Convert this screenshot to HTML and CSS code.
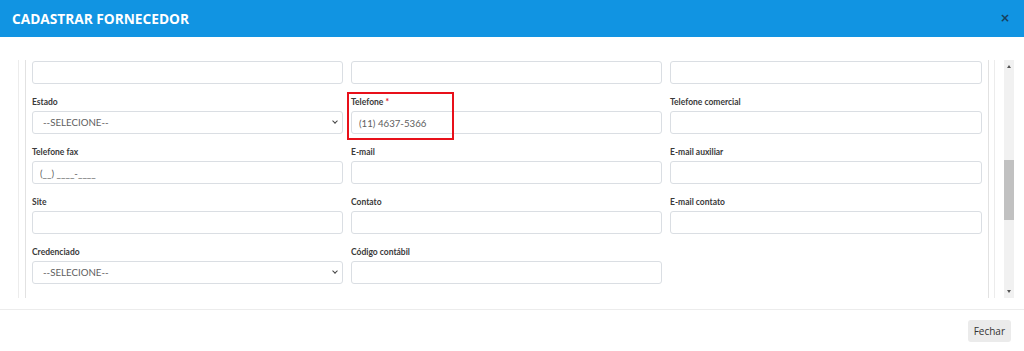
FILE: index.html
```html
<!DOCTYPE html>
<html lang="pt-BR">
<head>
    <meta charset="UTF-8">
    <meta name="viewport" content="width=device-width, initial-scale=1.0">
    <title>Cadastrar Fornecedor</title>
    <link rel="stylesheet" href="styles.css">
</head>
<body>

<div class="modal">
    <!-- Header -->
    <div class="modal-header">
        <h2>CADASTRAR FORNECEDOR</h2>
        <span class="close">&times;</span>
    </div>

    <!-- Body -->
    <div class="modal-body">
        <div class="scroll-wrap">
            <div class="scroll-view">
                <div class="panel-outer">
                    <div class="panel">
                        <div class="form-grid">
                            <div class="field"><input type="text"></div>
                            <div class="field"><input type="text"></div>
                            <div class="field"><input type="text"></div>

                            <div class="field">
                                <label>Estado</label>
                                <div class="select">--SELECIONE--</div>
                            </div>
                            <div class="field highlight">
                                <label>Telefone <span class="req">*</span></label>
                                <input type="text" value="(11) 4637-5366">
                                <div class="mark"></div>
                            </div>
                            <div class="field">
                                <label>Telefone comercial</label>
                                <input type="text">
                            </div>

                            <div class="field">
                                <label>Telefone fax</label>
                                <input type="text" value="(__) ____-____">
                            </div>
                            <div class="field">
                                <label>E-mail</label>
                                <input type="text">
                            </div>
                            <div class="field">
                                <label>E-mail auxiliar</label>
                                <input type="text">
                            </div>

                            <div class="field">
                                <label>Site</label>
                                <input type="text">
                            </div>
                            <div class="field">
                                <label>Contato</label>
                                <input type="text">
                            </div>
                            <div class="field">
                                <label>E-mail contato</label>
                                <input type="text">
                            </div>

                            <div class="field">
                                <label>Credenciado</label>
                                <div class="select">--SELECIONE--</div>
                            </div>
                            <div class="field">
                                <label>Código contábil</label>
                                <input type="text">
                            </div>
                        </div>
                    </div>
                </div>
            </div>
            <div class="scrollbar">
                <span class="arrow up"></span>
                <div class="track"><div class="thumb"></div></div>
                <span class="arrow down"></span>
            </div>
        </div>
    </div>

    <!-- Footer -->
    <div class="modal-footer">
        <button>Fechar</button>
    </div>
</div>

</body>
</html>
```

FILE: styles.css
```css
body {
    margin: 0;
    font-family: Lato, "Open Sans", Arial, sans-serif;
    background-color: #fff;
    color: #333;
}

.modal {
    height: 351px;
    display: flex;
    flex-direction: column;
}

.modal-header {
    height: 37px;
    background-color: #1194e2;
    display: flex;
    align-items: center;
    justify-content: space-between;
    padding: 0 12px;
    box-sizing: border-box;
}

.modal-header h2 {
    margin: 0;
    color: #fff;
    font-family: "Open Sans", Arial, sans-serif;
    font-size: 13.7px;
    font-weight: 700;
}

.modal-header .close {
    color: #173f5c;
    font-family: "DejaVu Sans", sans-serif;
    font-size: 12px;
    font-weight: 700;
    line-height: 1;
    margin-top: -2px;
    margin-right: 2px;
}

.modal-body {
    padding-top: 23px;
    height: 261px;
    box-sizing: border-box;
}

.scroll-wrap {
    display: flex;
    margin-left: 18px;
    width: 996px;
    height: 238px;
}

.scroll-view {
    flex: 1;
    overflow: hidden;
    border-left: 1px solid #ececec;
}

.panel-outer {
    margin-right: 9px;
    border-right: 1px solid #ececec;
    height: 100%;
}

.panel {
    margin-left: 6px;
    margin-right: 5px;
    border-left: 1px solid #e2e2e2;
    border-right: 1px solid #e2e2e2;
    height: 100%;
    padding: 1px 6px 0 6px;
    box-sizing: border-box;
}

.form-grid {
    display: grid;
    grid-template-columns: 311px 311px 312px;
    column-gap: 8px;
    row-gap: 10px;
}

.field {
    position: relative;
}

.field label {
    display: block;
    font-size: 8.5px;
    font-weight: 700;
    line-height: 13px;
    padding-top: 2px;
    margin-bottom: 2px;
    color: #3a3a3a;
}

.field .req {
    color: #e8101a;
}

.field input,
.field .select {
    display: block;
    width: 100%;
    height: 23px;
    box-sizing: border-box;
    border: 1px solid #dadee3;
    border-radius: 3px;
    padding: 0 7px;
    font-family: Lato, "Open Sans", Arial, sans-serif;
    font-size: 9.7px;
    color: #5e5e5e;
    background-color: #fff;
    outline: none;
}

.field .select {
    line-height: 21px;
    padding: 0 10px;
    position: relative;
}

.field .select::after {
    content: "";
    position: absolute;
    right: 5px;
    top: 7px;
    width: 3px;
    height: 3px;
    border-right: 1.5px solid #444;
    border-bottom: 1.5px solid #444;
    transform: rotate(45deg);
}

.highlight .mark {
    position: absolute;
    left: -4px;
    top: -2px;
    width: 107px;
    height: 48px;
    border: 2px solid #e8101a;
    box-sizing: border-box;
}

.scrollbar {
    width: 10px;
    background-color: #f1f1f1;
    display: flex;
    flex-direction: column;
    align-items: center;
}

.scrollbar .arrow {
    width: 0;
    height: 0;
    border-left: 2px solid transparent;
    border-right: 2px solid transparent;
    margin: 5px 0;
}

.scrollbar .up {
    border-bottom: 3px solid #555;
}

.scrollbar .down {
    border-top: 3px solid #555;
}

.scrollbar .track {
    flex: 1;
    width: 100%;
}

.scrollbar .thumb {
    margin-top: 87px;
    height: 60px;
    width: 100%;
    background-color: #c1c1c1;
}

.modal-footer {
    margin-top: 11px;
    border-top: 1px solid #ececec;
    flex: 1;
    display: flex;
    justify-content: flex-end;
    align-items: flex-start;
    padding: 10px 13px 0 0;
}

.modal-footer button {
    background-color: #ebebeb;
    border: none;
    border-radius: 3px;
    color: #333;
    font-family: "Open Sans", Arial, sans-serif;
    font-size: 10px;
    height: 22px;
    padding: 0 6px;
}
```
